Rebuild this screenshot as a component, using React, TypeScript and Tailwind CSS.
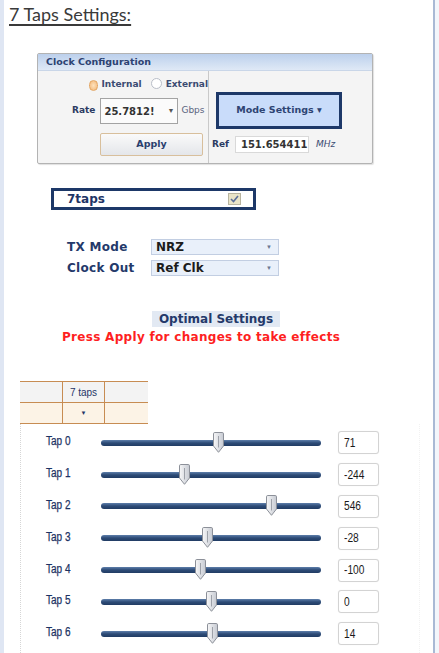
import React from 'react';

const taps = [
  { name: 'Tap 0', value: 71 },
  { name: 'Tap 1', value: -244 },
  { name: 'Tap 2', value: 546 },
  { name: 'Tap 3', value: -28 },
  { name: 'Tap 4', value: -100 },
  { name: 'Tap 5', value: 0 },
  { name: 'Tap 6', value: 14 },
];

const ui = "font-['DejaVu_Sans',sans-serif] font-bold";

function Radio({ checked }: { checked?: boolean }) {
  return checked ? (
    <span className="inline-block w-[11px] h-[11px] rounded-full border border-[#e3a766] bg-radial from-[#fde2bd] to-[#f2b574]" />
  ) : (
    <span className="inline-block w-[11px] h-[11px] rounded-full border border-[#b9bec8] bg-white" />
  );
}

function Thumb() {
  return (
    <svg width="11" height="21" viewBox="0 0 11 21">
      <defs>
        <linearGradient id="thumbFill" x1="0" x2="1" y1="0" y2="0">
          <stop offset="0" stopColor="#f7f7f8" />
          <stop offset="1" stopColor="#c6cad2" />
        </linearGradient>
      </defs>
      <path
        d="M0.5 1.8 Q0.5 0.5 1.8 0.5 H9.2 Q10.5 0.5 10.5 1.8 V14 L5.5 20.3 L0.5 14 Z"
        fill="url(#thumbFill)"
        stroke="#8c9099"
      />
      <path d="M5.5 4 V15.5" stroke="#9da1a9" />
    </svg>
  );
}

function TapRow({ name, value }: { name: string; value: number }) {
  const pct = ((value + 1000) / 2000) * 100;
  return (
    <div className="flex items-center h-[31.8px] pl-[25px]">
      <div className="w-[55px] mb-[7px]">
        <span className="inline-block origin-left scale-x-[0.8] text-[12.5px] text-[#1c3263] [-webkit-text-stroke:0.25px_#1c3263] font-['Liberation_Sans',sans-serif]">
          {name}
        </span>
      </div>
      <div className="relative w-[220px] h-[20px] flex items-center">
        <div className="w-full h-[6px] rounded-full bg-linear-to-b from-[#5e7fab] via-[#2d4b76] to-[#213c64]" />
        <div className="absolute top-[-1px]" style={{ left: `calc(${pct}% - 5.5px)` }}>
          <Thumb />
        </div>
      </div>
      <div className="ml-[17px] w-[41px] h-[23px] flex items-center pl-[5px] border border-[#d3d3d3] rounded-[3px] bg-white shadow-[0_0_1px_#e8e8e8]">
        <span className="inline-block origin-left scale-x-[0.85] text-[12px] text-[#1a1a1a] font-['Liberation_Sans',sans-serif]">
          {value}
        </span>
      </div>
    </div>
  );
}

export default function App() {
  return (
    <div className="flex w-[439px] h-[653px] bg-white overflow-hidden">
      <div className="w-[4px] bg-[#dfe6f3]" />
      <div className="w-[429px] flex flex-col">
        <div className="pl-[5px] pt-[2px] h-[30px]">
          <span className="text-[18px] leading-[24px] text-[#3a3a3a] underline underline-offset-[3px] decoration-[1.5px] font-['Lato',sans-serif]">
            7 Taps Settings:
          </span>
        </div>

        {/* Clock configuration panel */}
        <div className="ml-[33px] mt-[23px] w-[336px] h-[111px] flex flex-col border border-[#b3b3b3] rounded-[2px] bg-[#f4f4f4] shadow-[1px_1px_1px_#e0e0e0]">
          <div className="h-[17px] flex items-center pl-[8px] bg-linear-to-b from-[#bcd0ec] to-[#dfe9f6] border-b border-[#c9d6e8]">
            <span className={`${ui} text-[9.5px] text-[#2c4272]`}>Clock Configuration</span>
          </div>
          <div className="flex flex-1">
            <div className="w-[170px] flex flex-col">
              <div className="flex items-center pl-[51px] pt-[8px] h-[20px] gap-[3px] text-[9px] text-[#3b4b72]">
                <Radio checked />
                <span className={ui}>Internal</span>
                <span className="ml-[6px]"><Radio /></span>
                <span className={`${ui} ml-[1px]`}>External</span>
              </div>
              <div className="flex items-center pl-[34px] mt-[7px]">
                <span className={`${ui} text-[9px] text-[#2b3b62]`}>Rate</span>
                <div className="ml-[5px] w-[78px] h-[26px] flex items-center justify-between px-[3px] border border-[#a3a3a3] bg-[#fbfbfb]">
                  <span className={`${ui} text-[10px] text-[#333]`}>25.7812!</span>
                  <span className="text-[7px] text-[#555]">▼</span>
                </div>
                <span className="ml-[3px] text-[9px] text-[#5a6480] font-['DejaVu_Sans',sans-serif]">Gbps</span>
              </div>
              <div className="pl-[62px] mt-[9px]">
                <div className="w-[103px] h-[23px] flex items-center justify-center border border-[#d8bf9c] rounded-[2px] bg-linear-to-b from-[#fafafa] to-[#e4e6ea]">
                  <span className={`${ui} text-[9.5px] text-[#2b3f6e]`}>Apply</span>
                </div>
              </div>
            </div>
            <div className="w-px bg-[#c9c9c9]" />
            <div className="flex-1 flex flex-col">
              <div className="ml-[7px] mt-[21px] w-[126px] h-[37px] border-[3px] border-[#1d3868] bg-[#c9dcfa] flex items-center justify-center">
                <span className={`${ui} text-[9.5px] text-[#2e4473]`}>Mode Settings ▾</span>
              </div>
              <div className="flex items-center ml-[3px] mt-[7px]">
                <span className={`${ui} text-[9px] text-[#2b3b62]`}>Ref</span>
                <div className="ml-[6px] w-[74px] h-[17px] flex items-center pl-[5px] border border-[#d9d9d9] bg-white">
                  <span className={`${ui} text-[10px] text-[#333]`}>151.654411</span>
                </div>
                <span className="ml-[7px] text-[9px] text-[#3b4b72] italic font-['DejaVu_Sans',sans-serif]">MHz</span>
              </div>
            </div>
          </div>
        </div>

        {/* 7taps checkbox */}
        <div className="ml-[47px] mt-[24px] w-[205px] h-[22px] flex items-center justify-between pl-[13px] pr-[12px] border-[3px] border-[#1d3868] bg-white">
          <span className={`${ui} text-[12px] leading-[16px] text-[#1f3566]`}>7taps</span>
          <span className="w-[13px] h-[12px] flex items-center justify-center border border-[#b8b4a0] bg-[#e9e4c8]">
            <svg width="9" height="8" viewBox="0 0 9 8">
              <path d="M1 4 L3.5 6.5 L8 1" fill="none" stroke="#5b6f9b" strokeWidth="1.6" />
            </svg>
          </span>
        </div>

        {/* TX mode / clock out */}
        <div className="ml-[63px] mt-[29px] flex flex-col gap-[5px]">
          {[
            ['TX Mode', 'NRZ'],
            ['Clock Out', 'Ref Clk'],
          ].map(([label, val]) => (
            <div key={label} className="flex items-center h-[16px]">
              <span className={`${ui} w-[84px] text-[12px] leading-[16px] tracking-[0.3px] text-[#24396a]`}>{label}</span>
              <div className="w-[128px] h-[16px] flex items-center justify-between pl-[4px] pr-[6px] border border-[#c2cee2] bg-[#e9f0fa]">
                <span className={`${ui} text-[12px] leading-[14px] text-[#1c1c1c]`}>{val}</span>
                <span className="text-[6px] leading-[8px] text-[#6b7892]">▼</span>
              </div>
            </div>
          ))}
        </div>

        <div className="ml-[148px] mt-[35px] w-[128px] h-[16px] flex items-center justify-center bg-[#e2e9f3]">
          <span className={`${ui} text-[12px] leading-[16px] text-[#24396a]`}>Optimal Settings</span>
        </div>
        <div className={`${ui} ml-[58px] mt-[3px] text-[12px] leading-[15px] tracking-[0.3px] text-[#fe1f1f]`}>
          Press Apply for changes to take effects
        </div>

        {/* Tap table */}
        <div className="ml-[16px] mt-[36px] w-[128px] flex flex-col border-t border-[#c78c52]">
          <div className="flex h-[21px] bg-[#f3f3f3] border-b border-[#c78c52]">
            <div className="w-[42px]" />
            <div className="w-[43px] flex items-center justify-center border-l border-r border-[#c78c52] text-[10px] text-[#1f3566] font-['Liberation_Sans',sans-serif]">
              7 taps
            </div>
          </div>
          <div className="flex h-[21px] bg-[#fcf3e6] border-b border-[#c78c52]">
            <div className="w-[42px]" />
            <div className="w-[43px] flex items-center justify-center border-l border-r border-[#c78c52] text-[6px] text-[#1f3566]">
              ▼
            </div>
          </div>
        </div>

        {/* Tap sliders */}
        <div className="ml-[16px] w-[400px] flex-1 pt-[3px] border-l border-dotted border-[#d6d6d6] border-r border-r-[#f2f2f2]">
          {taps.map((t) => (
            <TapRow key={t.name} name={t.name} value={t.value} />
          ))}
        </div>
      </div>
      <div className="w-[2px] bg-[#a9b9d5]" />
      <div className="w-[4px] bg-[#f3f6fb]" />
    </div>
  );
}
